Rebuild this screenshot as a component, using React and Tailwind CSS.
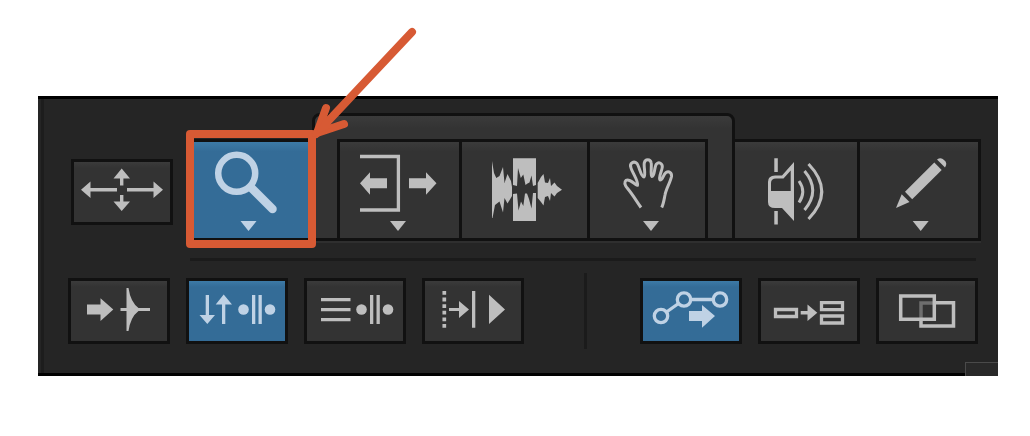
import React from 'react';
import clsx from 'clsx';

const Glyph = ({ big, children }) => (
  <svg
    viewBox={big ? '0 0 96 96' : '0 0 96 60'}
    className={clsx('shrink-0', big ? 'w-24 h-24' : 'w-24 h-[60px]')}
    fill="currentColor"
    aria-hidden="true"
  >
    {children}
  </svg>
);

const Caret = ({ x }) => <path d={`M${x - 8} 79h16l-8 10z`} />;

// Two bars with a dot on each side, shared by both shuffle buttons
const BarsAndDots = () => (
  <>
    <circle cx="54.5" cy="28.5" r="5.3" />
    <path d="M63 14h3.3v29H63zM69.5 14h3.3v29h-3.3z" />
    <circle cx="81" cy="28.5" r="5.3" />
  </>
);

const MoveIcon = () => (
  <Glyph>
    <path d="M7 27.7L16.5 19.5V26H43v3.5H16.5V36z" />
    <path d="M89 27.7L79.5 19.5V26H53v3.5h26.5V36z" />
    <path d="M47.7 6.5L56 16.5H49.4V23.5H46V16.5H39.5z" />
    <path d="M47.7 49L56 39.5H49.4V33H46v6.5H39.5z" />
  </Glyph>
);

const ZoomIcon = () => (
  <Glyph big>
    <circle cx="31.7" cy="31.3" r="18.5" fill="none" stroke="currentColor" strokeWidth="6.5" />
    <path d="M46 45.5L67.5 67" stroke="currentColor" strokeWidth="8.5" strokeLinecap="round" />
    <Caret x={43.5} />
  </Glyph>
);

const TrimIcon = () => (
  <Glyph big>
    <path d="M8 14.5H46.4V68H8" fill="none" stroke="currentColor" strokeWidth="3.3" />
    <path d="M8 41.3L18 30.3V36.3H35v10H18v6.5z" />
    <path d="M84.5 41.3L74 30.3V36.3H57v10H74v6.5z" />
    <Caret x={46} />
  </Glyph>
);

const WaveIcon = () => (
  <Glyph big>
    <path d="M15 19L17 31L19.3 36L22.5 34L26 25L27.5 41L30.5 32L34 39L35 45V54L30.500 61.5L27.5 56L26 70.5L22.5 59.5L18 63L15.5 76H15z" />
    <path d="M36 16.3H59V43L56 44L54.5 33.5L52.5 40.5L50.5 41.5L48.5 43L46.3 32.5L43.8 36L41 26L40 44L36 43z" />
    <path d="M36 79H59V51H56L54.5 66.5L52 57L50 51.5H48L46.3 64L44 59.5L41.5 68.5L40 51.5L36 52z" />
    <path d="M60.7 41L64 35L66.5 32L68 40.5L71 41L73 36L74 44L77.5 40.5L80 44L85 47.7L80 51L77.5 54.5L74 51L73 59L71 54L68 55L66.5 63.5L64 60L60.7 56z" />
  </Glyph>
);

const HandIcon = () => (
  <Glyph big>
    <path
      d="M41 65.5C37 60 33 53 28 47C25 43.5 23.5 40.5 26 38.3C30 36.5 34 42 37.5 43.3C39 40 32 30 31 26C29 21 34 18.5 37 21.5C39.5 25 41 35 44 35C46 33 43.5 24 44.3 21C45 16.5 50.5 16.5 51.2 21C52 25 50 33 52 34.5C55 34.5 54 25 56.5 22C59 19.5 62.5 21.5 62.3 25C62 29 58 36 60 38C63 38 63 32.5 66 30.5C69 28.5 72 31 71.5 34.5C70.5 40 66 47 65 53C64 58 63.5 62 61.7 65.5"
      fill="none"
      stroke="currentColor"
      strokeWidth="3"
      strokeLinejoin="round"
    />
    <Caret x={51} />
  </Glyph>
);

const ScrubIcon = () => (
  <Glyph big>
    <path d="M26.3 16.3h3.5V30h-3.5zM26.3 69h3.5V82.5h-3.5z" />
    <path
      fillRule="evenodd"
      d="M46 20V79L34 66H27Q20 66 20 60V40Q20 33.5 27 33.5H34zM42.7 28.5L35.5 36.5H28Q23 36.5 23 41V49H42.7z"
    />
    <g fill="none" stroke="currentColor" strokeWidth="3">
      <path d="M51 39Q58.5 49.5 51 60.5" />
      <path d="M56.5 29Q73 48.5 56.5 68" />
      <path d="M60.5 22Q87 49.5 60.5 77" />
    </g>
  </Glyph>
);

const PencilIcon = () => (
  <Glyph big>
    <path d="M25 66L30.7 52.3L38.5 60z" />
    <path d="M34 49.7L63.3 20.5L70.7 28L41.2 57.3z" />
    <path d="M66 17.5Q70 15 73 18Q77 21 74 25.5z" />
    <Caret x={49.7} />
  </Glyph>
);

const TransientIcon = () => (
  <Glyph>
    <path d="M16 23.5H29.5V17.3L42.3 28.5L29.5 40V33.5H16z" />
    <path d="M55.5 7H57.5Q59.5 21 67.5 27H79V30H67.5Q59.5 36 57.5 50H55.5V30H49.5V27H55.5z" />
  </Glyph>
);

const ShuffleIcon = () => (
  <Glyph>
    <path d="M16.7 14h3.3V34H26L18.3 43L10.5 34h6.2z" />
    <path d="M33 43h3.3V23.5H43L34.7 13.5L26.7 23.5H33z" />
    <BarsAndDots />
  </Glyph>
);

const LinesIcon = () => (
  <Glyph>
    <path d="M14 17h29.500v3.300H14zM14 27h29.500v3.300H14zM14 37h29.500v3.300H14z" />
    <BarsAndDots />
  </Glyph>
);

const NudgeIcon = () => (
  <Glyph>
    <path d="M19.3 10V47" stroke="currentColor" strokeWidth="3.7" strokeDasharray="3.8 2.8" />
    <path d="M24 27H34V20L44 28.5L34 37V30H24z" />
    <path d="M47 10h3.3V46.7H47zM64 13.7L80 28.5L64 43z" />
  </Glyph>
);

const AutomationIcon = () => (
  <Glyph>
    <g fill="none" stroke="currentColor" strokeWidth="3.3">
      <circle cx="18" cy="35" r="6.7" />
      <circle cx="41" cy="18.5" r="6.7" />
      <circle cx="77" cy="18.5" r="6.7" />
      <path d="M23.5 31L35.5 22.5M48 18.5H70" />
    </g>
    <path d="M46 30H59V24L72 35L59 46.7V40H46z" />
  </Glyph>
);

const LayersIcon = () => (
  <Glyph>
    <g fill="none" stroke="currentColor" strokeWidth="3.3">
      <path d="M14.5 28.5H35.5V35.5H14.5z" />
      <path d="M60.5 21.7H81.5V28.7H60.5z" />
      <path d="M60.5 35H81.5V42H60.5z" />
    </g>
    <path d="M39.7 30H46.5V23.5L56.3 31.7L46.5 40V33.5H39.7z" />
  </Glyph>
);

const OverlapIcon = () => (
  <Glyph>
    <g fill="none" stroke="currentColor" strokeWidth="3.5">
      <path d="M42 38V22H55" className="text-[#6e6e6e]" />
      <path d="M57 21.7H74.5V45H42V40" />
      <path d="M21.7 15H55.3V38.3H21.7z" />
    </g>
  </Glyph>
);

const tone = (active) =>
  active
    ? 'bg-linear-to-b from-[#3d7aa6] to-[#346c97] to-10% text-[#bfd2e5]'
    : 'bg-linear-to-b from-[#3b3b3b] to-[#333333] to-10% text-[#bebebe]';

const SmallButton = ({ label, active = false, className, children }) => (
  <button
    type="button"
    aria-label={label}
    aria-pressed={active}
    className={clsx(
      'flex h-[66px] w-[102px] shrink-0 items-center justify-center border-3 border-[#111111]',
      tone(active),
      className
    )}
  >
    {children}
  </button>
);

const ToolButton = ({ label, active = false, className, children }) => (
  <button
    type="button"
    aria-label={label}
    aria-pressed={active}
    className={clsx(
      'flex min-w-0 grow items-center justify-center overflow-hidden border-[#111111]',
      tone(active),
      className
    )}
  >
    {children}
  </button>
);

// Orange frame with an arrow pointing at its top right corner
const Callout = () => (
  <div className="pointer-events-none absolute -inset-x-1 -top-[9px] -bottom-[7px] z-10 rounded border-8 border-[#d75a34]">
    <svg viewBox="0 0 112 112" className="absolute bottom-full left-full h-28 w-28 overflow-visible" aria-hidden="true">
      <g fill="none" stroke="#d75a34" strokeWidth="8" strokeLinecap="round" strokeLinejoin="round">
        <path d="M104 6L8 108" />
        <path d="M18 82L9 107L36 98" />
      </g>
      <path d="M16 92L8 108L25 101z" fill="#d75a34" />
    </svg>
  </div>
);

export default function App() {
  return (
    <main className="bg-white pt-24 pr-8 pb-15 pl-[38px]">
      <div role="toolbar" aria-label="Edit tools" className="relative border-y-3 border-black bg-[#252525]">
        <div className="ml-[3px] border-l-3 border-[#1d1d1d] pt-[14px] pb-6 pl-6">
          {/* Tools */}
          <div className="flex items-end pr-[17px] pl-[3px]">
            <SmallButton label="Move view" className="mb-4">
              <MoveIcon />
            </SmallButton>

            <div className="relative ml-[17px] flex h-[102px] grow basis-[122px]">
              <ToolButton label="Zoom" active className="border-y-3 border-l-3">
                <ZoomIcon />
              </ToolButton>
              <Callout />
            </div>

            <div className="flex grow-3 basis-[423px] rounded-t-lg border-3 border-[#111111] bg-linear-to-b from-[#3b3b3b] to-[#333333] to-10% pt-[23px] pr-6 pl-[22px]">
              <div className="flex h-[99px] grow border-r-3 border-[#111111]">
                <ToolButton label="Trim" className="basis-[122px] border-t-3 border-l-3">
                  <TrimIcon />
                </ToolButton>
                <ToolButton label="Select" className="basis-[128px] border-t-3 border-l-3">
                  <WaveIcon />
                </ToolButton>
                <ToolButton label="Grab" className="basis-[118px] border-t-3 border-l-3">
                  <HandIcon />
                </ToolButton>
              </div>
            </div>

            <ToolButton label="Scrub" className="h-[102px] basis-[125px] border-y-3 border-r-3">
              <ScrubIcon />
            </ToolButton>
            <ToolButton label="Pencil" className="h-[102px] basis-[121px] border-y-3 border-r-3">
              <PencilIcon />
            </ToolButton>
          </div>

          <div className="mr-[17px] ml-[122px] h-[2px] bg-[#2f2f2f]" />
          <div className="mt-[15px] mr-[22px] ml-[122px] h-[3px] bg-[#1b1b1b]" />

          {/* Modes */}
          <div className="mt-3 flex items-center pr-5">
            <div className="flex gap-4">
              <SmallButton label="Tab to transient">
                <TransientIcon />
              </SmallButton>
              <SmallButton label="Zoom toggle" active>
                <ShuffleIcon />
              </SmallButton>
              <SmallButton label="Link track and edit selection">
                <LinesIcon />
              </SmallButton>
              <SmallButton label="Insertion follows playback">
                <NudgeIcon />
              </SmallButton>
            </div>
            <div className="mr-[53px] ml-auto h-[76px] w-[3px] bg-[#1b1b1b]" />
            <div className="flex gap-4">
              <SmallButton label="Automation follows edit" active>
                <AutomationIcon />
              </SmallButton>
              <SmallButton label="Mirrored editing">
                <LayersIcon />
              </SmallButton>
              <SmallButton label="Layered editing">
                <OverlapIcon />
              </SmallButton>
            </div>
          </div>
        </div>
        <div className="absolute right-0 -bottom-[3px] h-[14px] w-[33px] border-t border-l border-[#4a4a4a] bg-[#292929]" />
      </div>
    </main>
  );
}
